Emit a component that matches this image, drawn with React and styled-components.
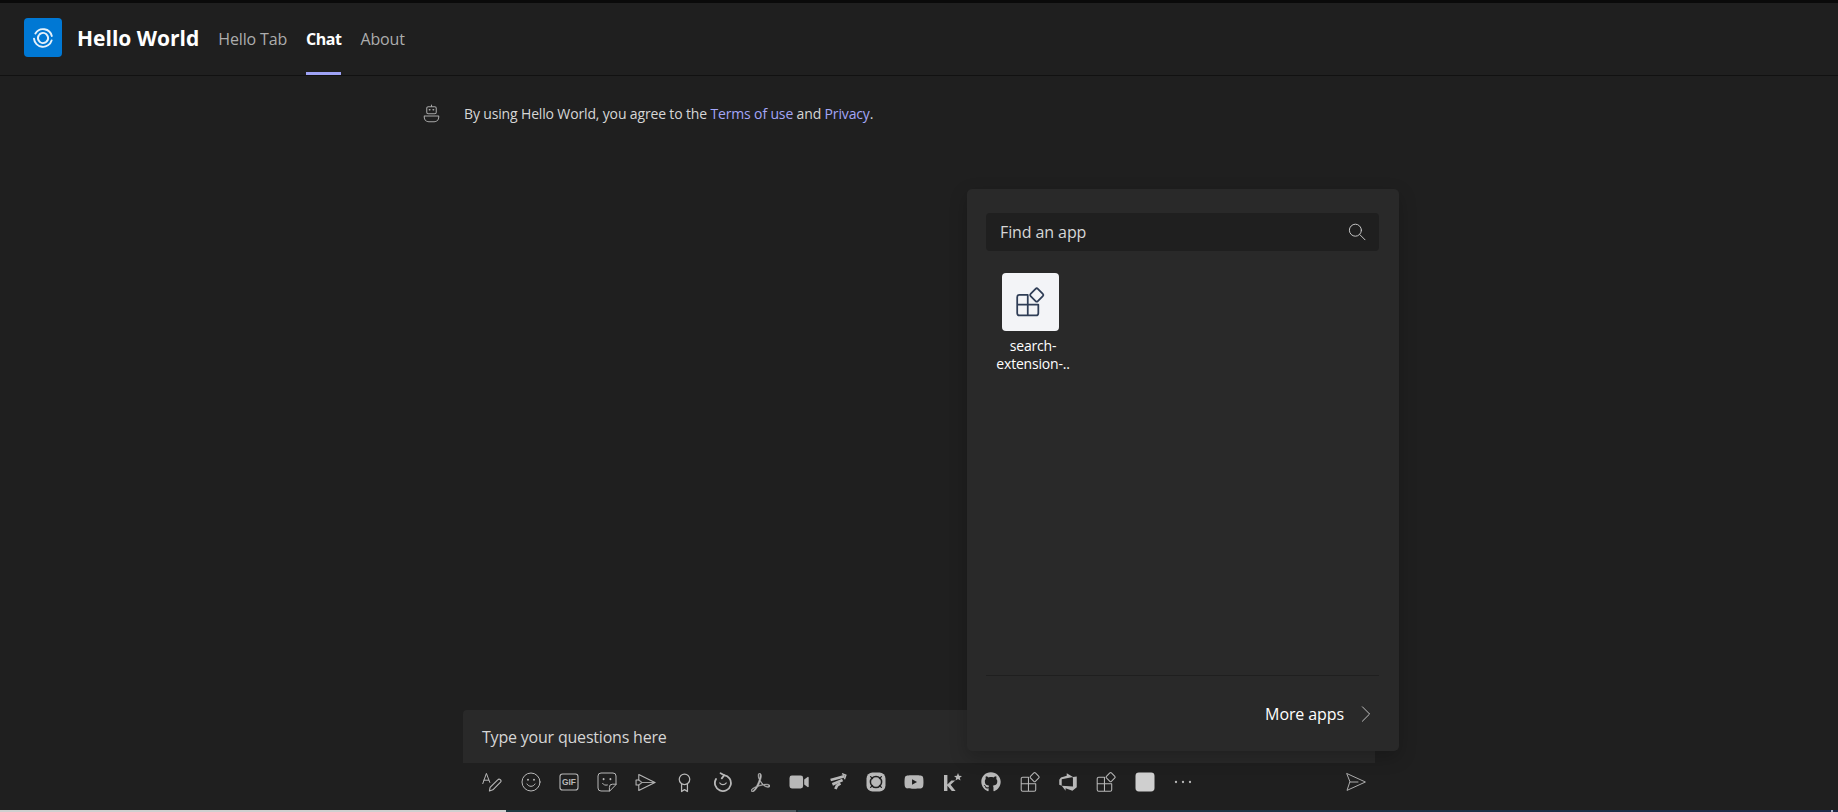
import React from 'react';
import styled, { createGlobalStyle } from 'styled-components';
import { FaGithub, FaYoutube } from 'react-icons/fa';
import { SiAdobeacrobatreader } from 'react-icons/si';
import { VscAzureDevops } from 'react-icons/vsc';

const GlobalStyle = createGlobalStyle`
  html, body, #root {
    margin: 0;
    height: 100%;
  }
  body {
    background: #1f1f1f;
    color: #fff;
    font-family: "Open Sans", "Noto Sans", sans-serif;
    overflow: hidden;
  }
`;

const Page = styled.div`
  display: flex;
  flex-direction: column;
  height: 812px;
`;

const TopStrip = styled.div`
  height: 3px;
  background: #0a0a0a;
`;

const Header = styled.header`
  display: flex;
  align-items: center;
  height: 72px;
  padding-left: 24px;
  border-bottom: 1px solid #111;
`;

const Logo = styled.div`
  display: flex;
  align-items: center;
  justify-content: center;
  width: 38px;
  height: 39px;
  margin-bottom: 3px;
  border-radius: 4px;
  background: #0078d4;
`;

const Title = styled.h1`
  margin: 0 19px 2px 15px;
  font-size: 21px;
  font-weight: 700;
  letter-spacing: 0;
`;

const Tabs = styled.nav`
  display: flex;
  align-self: stretch;
  gap: 19px;
`;

const Tab = styled.a`
  display: flex;
  align-items: center;
  font-size: 16px;
  letter-spacing: ${p => (p.$active ? '-0.5px' : '-0.15px')};
  font-weight: ${p => (p.$active ? 700 : 400)};
  color: ${p => (p.$active ? '#fff' : '#adadad')};
  border-bottom: 3px solid ${p => (p.$active ? '#9ea2f5' : 'transparent')};
  border-top: 3px solid transparent;
`;

const Main = styled.main`
  position: relative;
  flex: 1;
  display: flex;
  flex-direction: column;
  padding-left: 463px;
`;

const Notice = styled.div`
  display: flex;
  align-items: center;
  gap: 23px;
  margin: 28px 0 0 -41px;
  font-size: 14px;
  letter-spacing: -0.15px;
  color: #d6d6d6;
`;

const NoticeLink = styled.a`
  color: #a3a6f7;
`;

const Composer = styled.div`
  width: 912px;
  margin-top: auto;
  padding-bottom: 9px;
`;

const InputBox = styled.div`
  display: flex;
  align-items: center;
  height: 53px;
  padding: 0 19px;
  border-radius: 4px 4px 0 0;
  background: #292929;
  font-size: 16px;
  letter-spacing: -0.2px;
  color: #d6d6d6;
`;

const Toolbar = styled.div`
  display: flex;
  align-items: center;
  height: 38px;
  padding-left: 10px;
`;

const ToolButton = styled.span`
  display: flex;
  align-items: center;
  justify-content: center;
  width: 38.4px;
  color: #b8b8b8;
`;

const SendButton = styled(ToolButton)`
  margin-left: auto;
  color: #adadad;
`;

const Popup = styled.section`
  position: absolute;
  top: 113px;
  left: 967px;
  display: flex;
  flex-direction: column;
  width: 432px;
  height: 562px;
  box-sizing: border-box;
  padding: 24px 20px 0 19px;
  border-radius: 5px;
  background: #292929;
  box-shadow: 0 6px 18px rgba(0, 0, 0, 0.22);
`;

const Search = styled.div`
  display: flex;
  align-items: center;
  justify-content: space-between;
  height: 38px;
  padding: 0 13px 0 14px;
  border-radius: 4px;
  background: #1f1f1f;
  font-size: 16px;
  letter-spacing: -0.1px;
  color: #d6d6d6;
`;

const AppGrid = styled.div`
  display: flex;
  margin-top: 22px;
`;

const AppItem = styled.div`
  display: flex;
  flex-direction: column;
  align-items: center;
  width: 88px;
`;

const AppTile = styled.div`
  display: flex;
  align-items: center;
  justify-content: center;
  width: 57px;
  height: 58px;
  border-radius: 4px;
  background: #f3f4f7;
  color: #2f3d56;
`;

const AppLabel = styled.div`
  margin: 6px 0 0 6px;
  font-size: 14px;
  line-height: 18px;
  letter-spacing: -0.2px;
  text-align: center;
  white-space: nowrap;
  color: #fff;
`;

const Footer = styled.div`
  display: flex;
  align-items: center;
  justify-content: flex-end;
  gap: 14px;
  height: 75px;
  margin-top: auto;
  padding-right: 5px;
  border-top: 1px solid #1f1f1f;
  font-size: 16px;
  letter-spacing: -0.1px;
  color: #fff;
`;

const BottomStrip = styled.div`
  height: 2px;
  background: linear-gradient(
    90deg,
    #cfcfcf 0 506px,
    #1f3a42 506px 730px,
    #4e5c62 730px 796px,
    #1f2c32 796px 798px,
    #1f3a42 798px,
    #1c2a48 1831px,
    #a9b0c4 1831px 1833px,
    #1c2a48 1833px
  );
`;

const Svg = ({ size = 20, children, box = '0 0 20 20', ...rest }) => (
  <svg width={size} height={size} viewBox={box} fill="none" stroke="currentColor" strokeWidth="1" strokeLinecap="round" strokeLinejoin="round" {...rest}>
    {children}
  </svg>
);

const LogoMark = () => (
  <Svg size={24} box="0 0 24 24" stroke="#fff" opacity="0.9">
    <path d="M4.4 7.4A9 9 0 0 1 20.8 10M20.6 14.4A9 9 0 0 1 3 12.6" strokeWidth="1.9" />
    <circle cx="12" cy="12" r="5" strokeWidth="2" strokeDasharray="13 1.5 15 1.5" transform="rotate(60 12 12)" />
  </Svg>
);

const BotIcon = () => (
  <Svg size={19} box="0 0 18 20" strokeWidth="1.1" stroke="#a8a8a8">
    <path d="M9 1v1.6" />
    <rect x="4" y="2.8" width="10" height="7.4" rx="1.6" />
    <path d="M6.8 6h.5M10.7 6h.5" strokeWidth="1.6" />
    <path d="M1.4 12.6h15.2v1.6a4.6 4.6 0 0 1-4.6 4.4H6a4.6 4.6 0 0 1-4.6-4.4z" />
  </Svg>
);

const SearchIcon = () => (
  <Svg size={18} box="0 0 18 18" stroke="#c4c4c4">
    <circle cx="7.4" cy="7.2" r="6" />
    <path d="M11.8 11.6l5.2 5.2" />
  </Svg>
);

const AppsIcon = ({ size = 22, weight = 0.95 }) => (
  <Svg size={size} strokeWidth={weight}>
    <path d="M8.6 5.6H3.4a1.4 1.4 0 0 0-1.4 1.4v10a1.4 1.4 0 0 0 1.4 1.4h10.4a1.4 1.4 0 0 0 1.4-1.4v-5.4H2M8.6 5.6v12.8" />
    <rect x="11" y="2.4" width="6.4" height="6.4" rx="1" transform="rotate(45 14.2 5.6)" />
  </Svg>
);

const FormatIcon = () => (
  <Svg>
    <path d="M0.8 11.6L4.4 1.4l3.4 9M1.9 8.2h4.8" />
    <path d="M7.4 19l.7-3.6 7.6-7.6a1.6 1.6 0 0 1 2.8 2.4l-7.6 7.6z" strokeWidth="1.1" />
  </Svg>
);

const EmojiIcon = () => (
  <Svg>
    <circle cx="10" cy="10" r="9" />
    <path d="M6 12c1 1.6 2.4 2.3 4 2.3s3-.7 4-2.3" />
    <path d="M7 7.6v.2M13 7.6v.2" strokeWidth="1.9" />
  </Svg>
);

const GifIcon = () => (
  <Svg>
    <rect x="1" y="2" width="18" height="16" rx="2.6" strokeWidth="1.1" />
    <text x="10" y="13" textAnchor="middle" fontFamily="Liberation Sans, sans-serif" fontSize="8.4" fontWeight="700" fill="currentColor" stroke="none">GIF</text>
  </Svg>
);

const StickerIcon = () => (
  <Svg>
    <path d="M12.4 19H4a3 3 0 0 1-3-3V4a3 3 0 0 1 3-3h12a3 3 0 0 1 3 3v8.2z" />
    <path d="M12.4 19v-3.6a3 3 0 0 1 3-3.2H19" />
    <path d="M6.6 7v.2M13.4 7v.2" strokeWidth="1.9" />
    <path d="M5.6 11.4c1 1.5 2.6 2.1 4.8 1.6" />
  </Svg>
);

const ForwardIcon = () => (
  <Svg size={21}>
    <path d="M3.6 2.4L19 10 3.6 17.6v-5.2H1V7.6h2.6z" />
    <path d="M3.6 7.6l3 2.4-3 2.4M6.6 10H19" opacity="0.85" />
  </Svg>
);

const BadgeIcon = () => (
  <Svg size={21}>
    <circle cx="10" cy="7" r="5" strokeWidth="1.2" />
    <path d="M7.2 11.6v7l2.8-1.8 2.8 1.8v-7" strokeWidth="1.2" />
  </Svg>
);

const LoopIcon = () => (
  <Svg strokeWidth="1.8">
    <path d="M11 3.1A8 8 0 1 1 3 7" />
    <path d="M7.6 1.2l3.6 2-2.4 3.2" />
    <path d="M6.8 11c.8 1.2 2 1.7 3.2 1.7s2.4-.5 3.2-1.7" strokeWidth="1.3" />
  </Svg>
);

const PdfIcon = styled(SiAdobeacrobatreader)`
  stroke: currentColor;
  stroke-width: 0.7px;
`;

const VideoIcon = () => (
  <Svg stroke="none" fill="currentColor">
    <rect x="0.5" y="3.6" width="13.6" height="12.8" rx="2.4" />
    <path d="M15.2 7.6l3.4-2.6a.7.7 0 0 1 1.1.6v8.8a.7.7 0 0 1-1.1.6l-3.4-2.6z" />
  </Svg>
);

const StackIcon = () => (
  <Svg strokeWidth="2.8" strokeLinecap="butt" strokeLinejoin="miter">
    <path d="M2.6 8L10 6l6.6-1.8" />
    <path d="M14 1.6l3.8 1.6-1.4 4" strokeWidth="1.5" />
    <path d="M4.4 12.4L10 10l4.6-2" />
    <path d="M7.4 17l1.6-3.4 3.4-2.2" />
  </Svg>
);

const RingIcon = () => (
  <Svg>
    <rect x="0.5" y="0.5" width="19" height="19" rx="6" fill="currentColor" stroke="none" />
    <circle cx="10" cy="10" r="5.6" stroke="#1f1f1f" strokeWidth="1.5" />
    <path d="M4.6 4.6l2 2M15.4 4.6l-2 2M4.6 15.4l2-2M15.4 15.4l-2-2" stroke="#1f1f1f" strokeWidth="1.3" />
  </Svg>
);

const KudosIcon = () => (
  <Svg stroke="none" fill="currentColor">
    <path d="M1 3h3.4v9.4L8.4 8.4h3.8l-4.6 4.4L12.6 19H8.8L4.4 13.8V19H1z" />
    <path d="M15 1l1.1 2.7 2.9.2-2.2 1.9.7 2.8L15 7l-2.5 1.6.7-2.8L11 3.9l2.9-.2z" />
  </Svg>
);

const BlankIcon = () => (
  <Svg stroke="none" fill="#cfcfcf">
    <rect x="0.5" y="0.5" width="19" height="19" rx="3.4" />
  </Svg>
);

const DotsIcon = () => (
  <Svg stroke="none" fill="currentColor">
    <circle cx="3" cy="10" r="1.15" />
    <circle cx="10" cy="10" r="1.15" />
    <circle cx="17" cy="10" r="1.15" />
  </Svg>
);

const SendIcon = () => (
  <Svg>
    <path d="M1 1.6L19.4 10 1 18.4 3.8 10z" />
    <path d="M3.8 10H12" />
  </Svg>
);

const ChevronIcon = () => (
  <Svg size={16} box="0 0 16 16" stroke="#c0c0c0">
    <path d="M4.4 0.8L11.6 8l-7.2 7.2" />
  </Svg>
);

const tools = [
  <FormatIcon />,
  <EmojiIcon />,
  <GifIcon />,
  <StickerIcon />,
  <ForwardIcon />,
  <BadgeIcon />,
  <LoopIcon />,
  <PdfIcon size={19} />,
  <VideoIcon />,
  <StackIcon />,
  <RingIcon />,
  <FaYoutube size={20} />,
  <KudosIcon />,
  <FaGithub size={20} />,
  <AppsIcon />,
  <VscAzureDevops size={20} />,
  <AppsIcon />,
  <BlankIcon />,
  <DotsIcon />,
];

const App = () => (
  <Page>
    <GlobalStyle />
    <TopStrip />
    <Header>
      <Logo>
        <LogoMark />
      </Logo>
      <Title>Hello World</Title>
      <Tabs>
        <Tab>Hello Tab</Tab>
        <Tab $active>Chat</Tab>
        <Tab>About</Tab>
      </Tabs>
    </Header>
    <Main>
      <Notice>
        <BotIcon />
        <span>
          By using Hello World, you agree to the <NoticeLink>Terms of use</NoticeLink> and <NoticeLink>Privacy</NoticeLink>.
        </span>
      </Notice>
      <Composer>
        <InputBox>Type your questions here</InputBox>
        <Toolbar>
          {tools.map((icon, i) => (
            <ToolButton key={i}>{icon}</ToolButton>
          ))}
          <SendButton>
            <SendIcon />
          </SendButton>
        </Toolbar>
      </Composer>
      <Popup>
        <Search>
          Find an app
          <SearchIcon />
        </Search>
        <AppGrid>
          <AppItem>
            <AppTile>
              <AppsIcon size={32} weight={1.1} />
            </AppTile>
            <AppLabel>
              search-
              <br />
              extension-..
            </AppLabel>
          </AppItem>
        </AppGrid>
        <Footer>
          More apps
          <ChevronIcon />
        </Footer>
      </Popup>
    </Main>
    <BottomStrip />
  </Page>
);

export default App;
